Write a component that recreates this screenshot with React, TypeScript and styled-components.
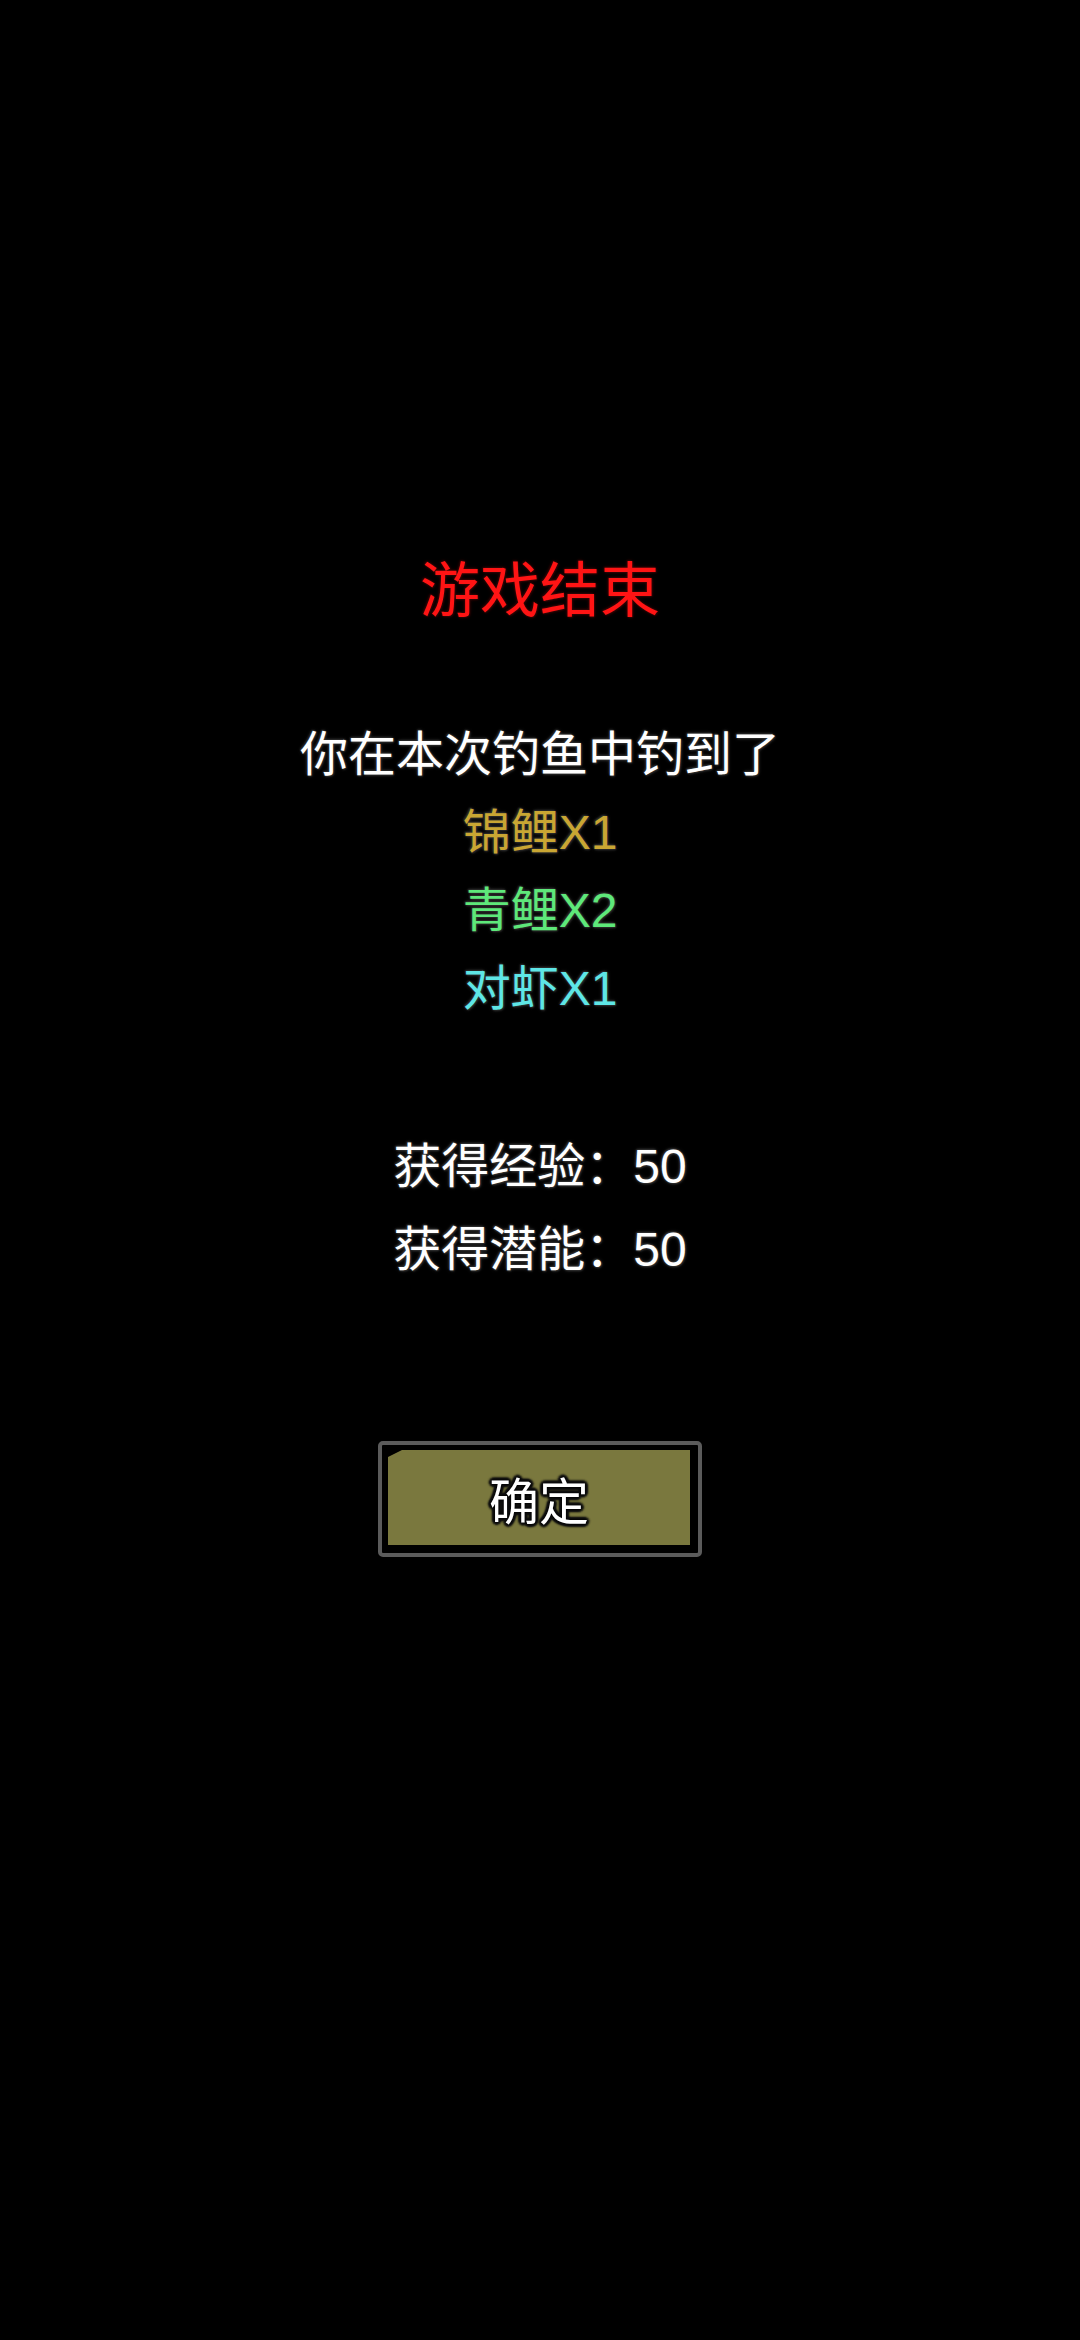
import React from "react";
import styled, { createGlobalStyle } from "styled-components";

const GlobalStyle = createGlobalStyle`
  html, body {
    margin: 0;
    padding: 0;
    background: #000000;
  }
  body {
    font-family: "Liberation Sans", "Noto Sans CJK SC", sans-serif;
  }
`;

const Screen = styled.div`
  width: 1080px;
  min-height: 2340px;
  background: #000000;
  display: flex;
  flex-direction: column;
  align-items: center;
  padding-top: 546px;
  box-sizing: border-box;
`;

const Title = styled.h1`
  margin: 0;
  font-family: "Noto Sans CJK SC", sans-serif;
  font-size: 60px;
  line-height: 80px;
  font-weight: 400;
  color: #ff1414;
  text-shadow: 0 0 2px #3a0808, 0 0 4px #2a0606, 1px 1px 2px #2a0606,
    -1px -1px 2px #2a0606;
`;

const List = styled.div`
  margin-top: 90px;
  display: flex;
  flex-direction: column;
  align-items: center;
`;

const Line = styled.div<{ $color: string }>`
  font-family: "Liberation Sans", "Noto Sans CJK SC", sans-serif;
  font-size: 48px;
  line-height: 78px;
  color: ${(p) => p.$color};
  white-space: nowrap;
  text-shadow: 0 0 2px #333333, 0 0 4px #2a2a2a, 1px 1px 2px #2a2a2a,
    -1px -1px 2px #2a2a2a;
`;

const Stats = styled.div`
  margin-top: 97px;
  display: flex;
  flex-direction: column;
  align-items: center;
`;

const StatLine = styled.div`
  font-family: "Liberation Sans", "Noto Sans CJK SC", sans-serif;
  font-size: 48px;
  line-height: 83px;
  color: #ffffff;
  white-space: nowrap;
  text-shadow: 0 0 2px #3a3a3a, 0 0 4px #2e2e2e, 1px 1px 2px #2e2e2e,
    -1px -1px 2px #2e2e2e;
`;

const ButtonFrame = styled.button`
  margin-top: 150px;
  width: 324px;
  height: 116px;
  box-sizing: border-box;
  border: 4px solid #5b5b5b;
  border-radius: 5px;
  background: #000000;
  padding: 5px 8px 8px 6px;
  display: flex;
  cursor: pointer;
`;

const ButtonFace = styled.div`
  flex: 1;
  background: #7a783e;
  clip-path: polygon(14px 0, 100% 0, 100% 100%, 0 100%, 0 7px);
  display: flex;
  align-items: center;
  justify-content: center;
  font-family: "Noto Sans CJK SC", sans-serif;
  font-size: 50px;
  line-height: 1;
  color: #ffffff;
  text-shadow: 0 0 2px #000, 0 0 3px #000, 2px 2px 2px #111, -2px -2px 2px #111,
    2px -2px 2px #111, -2px 2px 2px #111, 3px 0 2px #111, -3px 0 2px #111,
    0 3px 2px #111, 0 -3px 2px #111;
`;

const items = [
  { text: "锦鲤X1", color: "#c9a633" },
  { text: "青鲤X2", color: "#5ee87a" },
  { text: "对虾X1", color: "#5ee6e6" },
];

export default function App() {
  return (
    <>
      <GlobalStyle />
      <Screen>
        <Title>游戏结束</Title>
        <List>
          <Line $color="#ffffff">你在本次钓鱼中钓到了</Line>
          {items.map((it) => (
            <Line key={it.text} $color={it.color}>
              {it.text}
            </Line>
          ))}
        </List>
        <Stats>
          <StatLine>获得经验：50</StatLine>
          <StatLine>获得潜能：50</StatLine>
        </Stats>
        <ButtonFrame>
          <ButtonFace>确定</ButtonFace>
        </ButtonFrame>
      </Screen>
    </>
  );
}
